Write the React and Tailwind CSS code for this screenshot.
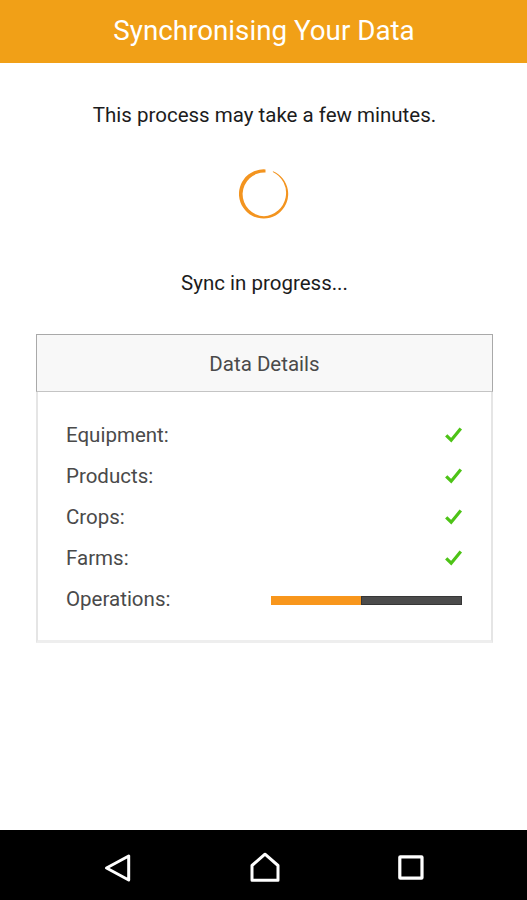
const rows = ['Equipment:', 'Products:', 'Crops:', 'Farms:'];

function Spinner() {
  return (
    <svg className="h-[50px] w-[50px]" viewBox="0 0 50 50">
      <path
        d="M26.5 0.4 A24.6 24.6 0 1 0 34 2.2 L33.8 2.9 A23.3 23.3 0 0 1 25 47.2 A22.2 22.2 0 0 1 3.6 24.5 A21.8 21.8 0 0 1 26.5 3.6 Z"
        fill="#f3941f"
      />
    </svg>
  );
}

function Check() {
  return (
    <svg className="mr-[1px] h-4 w-[18px]" viewBox="0 0 18 16" fill="none">
      <path d="M1.2 8.4 L6.2 13.2 L15.8 1.6" stroke="#4dc316" strokeWidth="3.2" />
    </svg>
  );
}

export default function App() {
  return (
    <div className="flex h-[900px] w-[527px] flex-col overflow-hidden bg-white font-[Roboto,sans-serif]">
      <header className="flex h-[63px] shrink-0 justify-center bg-[#f1a017] pt-[15px] pl-[1px] text-white">
        <h1 className="text-[27.75px] leading-8">Synchronising Your Data</h1>
      </header>
      <main className="flex flex-1 flex-col items-center pt-[40px] pl-[2px] text-[20.5px] leading-6 text-[#1c1c1c]">
        <p>This process may take a few minutes.</p>
        <div className="mt-[42px] mr-[1px] flex">
          <Spinner />
        </div>
        <p className="mt-[52px]">Sync in progress...</p>
        <section className="mt-[39px] h-[309px] w-[457px] border-x-2 border-b-3 border-[#e5e5e5] border-b-[#eeeeee] text-[#4a4a4a]">
          <h2 className="-mx-[2px] flex h-[58px] items-center justify-center border border-[#a9a9a9] border-b-[#c4c4c4] bg-[#f8f8f8] pt-[1px]">
            Data Details
          </h2>
          <div className="flex flex-col pt-[22px] pr-[27px] pl-[28px]">
            {rows.map((row) => (
              <div key={row} className="flex h-[41px] items-center justify-between">
                <span>{row}</span>
                <Check />
              </div>
            ))}
            <div className="flex h-[41px] items-center justify-between">
              <span>Operations:</span>
              <div className="mt-[3px] mr-[2px] flex h-[9px] w-[191px] bg-[#4b4b4b]">
                <div className="w-[90px] bg-[#f8961c]" />
                <div className="flex-1 border border-[#363636]" />
              </div>
            </div>
          </div>
        </section>
      </main>
      <nav className="flex h-[70px] shrink-0 items-center justify-between bg-black pt-[5px] pr-[100px] pl-[102px] text-white">
        <svg className="h-8 w-8" viewBox="0 0 32 32" fill="none" stroke="currentColor" strokeWidth="3">
          <path d="M4.5 16 L26.7 4 V28 Z" strokeLinejoin="round" />
        </svg>
        <svg className="h-8 w-8" viewBox="0 0 32 32" fill="none" stroke="currentColor" strokeWidth="3">
          <path d="M3 28.3 V13.5 L16 2.2 L29 13.5 V28.3 Z" strokeLinejoin="round" />
        </svg>
        <svg className="h-8 w-8" viewBox="0 0 32 32" fill="none" stroke="currentColor" strokeWidth="3.2">
          <rect x="4.8" y="4.8" width="22.2" height="21.4" rx="0.5" />
        </svg>
      </nav>
    </div>
  );
}
